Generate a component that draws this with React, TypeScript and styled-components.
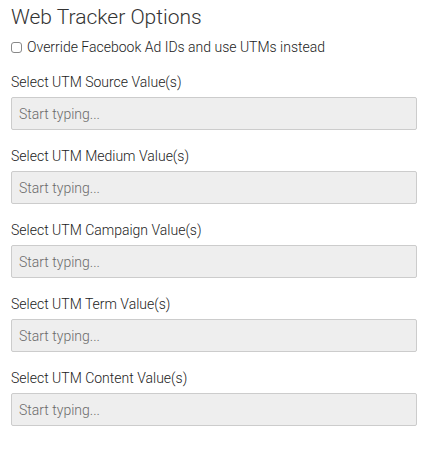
import React from "react"
import styled, { createGlobalStyle } from "styled-components"

const GlobalStyle = createGlobalStyle`
  html, body {
    margin: 0;
    padding: 0;
    background: #fff;
  }
  body {
    font-family: Roboto, "Liberation Sans", Arial, sans-serif;
    color: #333;
  }
`

const StyledWrapper = styled.section`
  padding: 4px 10px 0 11px;
  width: 427px;
  box-sizing: border-box;
`
const StyledTitle = styled.h3`
  font-size: 21px;
  font-weight: 300;
  line-height: 26px;
  margin: 0 0 7px;
  color: #333;
`
const StyledCheckRow = styled.label`
  align-items: center;
  display: flex;
  font-size: 14px;
  font-weight: 300;
  gap: 5px;
  height: 19px;
  margin-bottom: 17px;
  color: #222;
`
const StyledCheckbox = styled.input`
  appearance: none;
  border: 1px solid #888;
  border-radius: 3px;
  box-sizing: border-box;
  height: 11px;
  margin: 1px 0 0;
  width: 11px;
`
const StyledField = styled.div`
  display: flex;
  flex-direction: column;
  margin-bottom: 17px;
`
const StyledLabel = styled.label`
  color: #222;
  font-size: 14px;
  font-weight: 300;
  line-height: 18px;
  margin-bottom: 6px;
`
const StyledInput = styled.input`
  background-color: #eee;
  border: 1px solid #ccc;
  border-radius: 2px;
  box-sizing: border-box;
  color: #555;
  font-family: Roboto, "Liberation Sans", Arial, sans-serif;
  font-size: 14px;
  font-weight: 300;
  height: 33px;
  padding: 0 7px;
  width: 100%;

  &::placeholder {
    color: #6a6a6a;
  }
  &:focus {
    outline: none;
  }
`

const fields = ["Source", "Medium", "Campaign", "Term", "Content"]

const App = () => {
  return (
    <StyledWrapper>
      <GlobalStyle />
      <StyledTitle>Web Tracker Options</StyledTitle>
      <StyledCheckRow>
        <StyledCheckbox type="checkbox" />
        Override Facebook Ad IDs and use UTMs instead
      </StyledCheckRow>
      {fields.map(name => (
        <StyledField key={name}>
          <StyledLabel>Select UTM {name} Value(s)</StyledLabel>
          <StyledInput placeholder="Start typing..." />
        </StyledField>
      ))}
    </StyledWrapper>
  )
}

export default App
